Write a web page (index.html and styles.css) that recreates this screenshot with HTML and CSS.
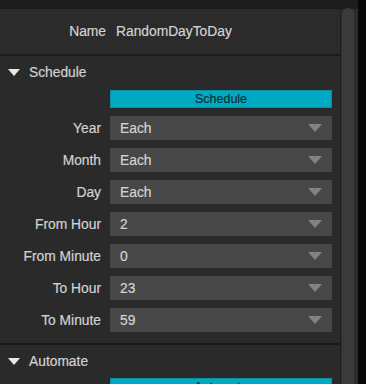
FILE: index.html
```html
<!DOCTYPE html>
<html>
<head>
<meta charset="utf-8">
<link rel="stylesheet" href="styles.css">
</head>
<body>
<div class="window">
  <div class="panel">
    <div class="topbar"></div>
    <div class="name-row">
      <span class="name-label">Name</span>
      <span class="name-value">RandomDayToDay</span>
    </div>
    <div class="sep"></div>
    <div class="section">
      <div class="section-head"><span class="tri"></span><span>Schedule</span></div>
      <div class="section-body">
        <div class="row"><span class="label"></span><div class="btn">Schedule</div></div>
        <div class="row"><span class="label">Year</span><div class="select"><span>Each</span><span class="arrow"></span></div></div>
        <div class="row"><span class="label">Month</span><div class="select"><span>Each</span><span class="arrow"></span></div></div>
        <div class="row"><span class="label">Day</span><div class="select"><span>Each</span><span class="arrow"></span></div></div>
        <div class="row"><span class="label">From Hour</span><div class="select"><span>2</span><span class="arrow"></span></div></div>
        <div class="row"><span class="label">From Minute</span><div class="select"><span>0</span><span class="arrow"></span></div></div>
        <div class="row"><span class="label">To Hour</span><div class="select"><span>23</span><span class="arrow"></span></div></div>
        <div class="row"><span class="label">To Minute</span><div class="select"><span>59</span><span class="arrow"></span></div></div>
      </div>
    </div>
    <div class="sep"></div>
    <div class="section">
      <div class="section-head"><span class="tri"></span><span>Automate</span></div>
      <div class="section-body tight">
        <div class="row"><span class="label"></span><div class="btn">Automate</div></div>
      </div>
    </div>
  </div>
  <div class="scroll">
    <div class="scroll-top"></div>
    <div class="thumb"></div>
  </div>
</div>
</body>
</html>
```

FILE: styles.css
```css
html, body {
  margin: 0;
  padding: 0;
  background: #080808;
  height: 100%;
  overflow: hidden;
}
body {
  font-family: "Liberation Sans", Arial, sans-serif;
  font-size: 13.8px;
  color: #d2d2d2;
  -webkit-text-stroke: 0.2px #d2d2d2;
}
.window {
  display: flex;
  width: 358px;
  height: 384px;
  overflow: hidden;
}
.panel {
  width: 340px;
  background: #2a2a2a;
  border-right: 1px solid #1f1f1f;
  display: flex;
  flex-direction: column;
}
.topbar {
  height: 9px;
  flex: none;
  background: #1c1c1c;
}
.name-row {
  height: 45px;
  flex: none;
  display: flex;
  align-items: center;
  gap: 10px;
  background: #2b2b2b;
}
.name-label {
  width: 106px;
  text-align: right;
}
.sep {
  height: 2px;
  flex: none;
  background: #1b1b1b;
}
.section {
  flex: none;
}
.section-head {
  height: 32px;
  display: flex;
  align-items: center;
  padding-left: 8px;
  gap: 9px;
}
.tri {
  width: 0;
  height: 0;
  border-left: 6px solid transparent;
  border-right: 6px solid transparent;
  border-top: 7px solid #e8e8e8;
}
.section-body {
  display: flex;
  flex-direction: column;
  gap: 8px;
  padding: 2px 0 11px;
}
.section-body.tight {
  padding-top: 1px;
}
.row {
  display: flex;
  align-items: center;
  gap: 9px;
}
.label {
  width: 101px;
  text-align: right;
  flex: none;
}
.btn {
  width: 222px;
  height: 18px;
  background: #00a9c2;
  color: #0e2f36;
  -webkit-text-stroke: 0.2px #0e2f36;
  font-size: 12.5px;
  display: flex;
  align-items: center;
  justify-content: center;
  box-sizing: border-box;
  border: 1px solid #0b8fa3;
}
.select {
  width: 222px;
  height: 24px;
  background: #474747;
  display: flex;
  align-items: center;
  justify-content: space-between;
  padding: 0 10px;
  box-sizing: border-box;
  color: #d4d4d4;
}
.arrow {
  width: 0;
  height: 0;
  border-left: 7px solid transparent;
  border-right: 7px solid transparent;
  border-top: 8px solid #828282;
}
.scroll {
  width: 17px;
  background: #2c2c2c;
  position: relative;
}
.scroll-top {
  height: 9px;
  background: #1c1c1c;
}
.thumb {
  position: absolute;
  left: 1px;
  top: 8px;
  width: 12px;
  bottom: -20px;
  border-radius: 6px;
  background: #3b3b3b;
}
```
